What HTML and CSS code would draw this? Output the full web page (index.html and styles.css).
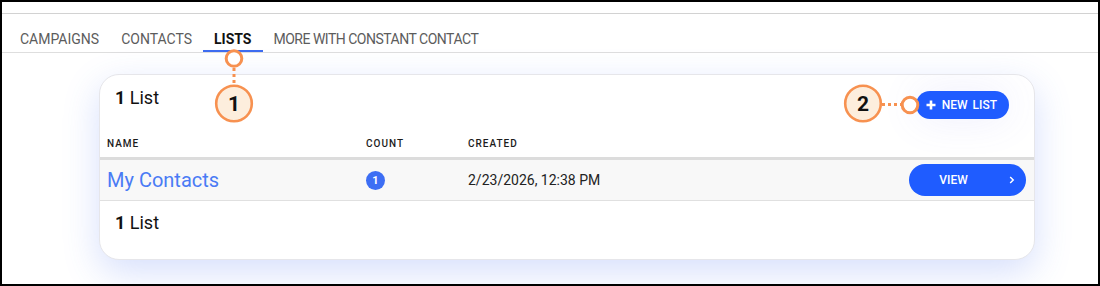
FILE: index.html
```html
<!DOCTYPE html>
<html>
<head>
<meta charset="utf-8">
<link rel="stylesheet" href="styles.css">
</head>
<body>
<div class="frame">
  <div class="topbar"></div>
  <nav class="tabs">
    <a class="tab">CAMPAIGNS</a>
    <a class="tab">CONTACTS</a>
    <a class="tab active">LISTS</a>
    <a class="tab tab-more">MORE WITH CONSTANT CONTACT</a>
  </nav>
  <section class="card">
    <div class="card-head">
      <div class="title"><b>1</b> List</div>
      <button class="btn new-btn">
        <svg class="plus" width="10" height="10" viewBox="0 0 10 10"><path d="M5 0.5v9M0.5 5h9" stroke="#fff" stroke-width="2.6"/></svg>
        <span class="new-label">NEW LIST</span>
      </button>
    </div>
    <table class="lists">
      <thead>
        <tr>
          <th class="c-name">NAME</th>
          <th class="c-count">COUNT</th>
          <th class="c-created">CREATED</th>
          <th class="c-act"></th>
        </tr>
      </thead>
      <tbody>
        <tr>
          <td class="c-name"><a class="list-link">My Contacts</a></td>
          <td class="c-count"><span class="badge">1</span></td>
          <td class="c-created">2/23/2026, 12:38 PM</td>
          <td class="c-act">
            <button class="btn view-btn"><span class="view-label">VIEW</span>
              <svg class="chev" width="6" height="8" viewBox="0 0 6 8"><path d="M1.2 1l3 3-3 3" fill="none" stroke="#fff" stroke-width="1.5"/></svg>
            </button>
          </td>
        </tr>
      </tbody>
    </table>
    <div class="card-foot"><b>1</b> List</div>
  </section>
  <svg class="annot" width="1100" height="286" viewBox="0 0 1100 286">
    <g fill="none" stroke="#f79150" stroke-width="3">
      <line x1="234" y1="68" x2="234" y2="84" stroke-dasharray="3 3"/>
      <line x1="882" y1="104.5" x2="902" y2="104.5" stroke-dasharray="3 3"/>
    </g>
    <circle cx="234" cy="58.5" r="7.8" fill="#fff" stroke="#f79150" stroke-width="3"/>
    <circle cx="234" cy="103.5" r="17.8" fill="#fdeedd" stroke="#f79150" stroke-width="2.6"/>
    <circle cx="910" cy="105" r="7.8" fill="#fff" stroke="#f79150" stroke-width="3"/>
    <circle cx="863" cy="103.5" r="17.8" fill="#fdeedd" stroke="#f79150" stroke-width="2.6"/>
    <text x="234" y="111" class="annot-num">1</text>
    <text x="863" y="111" class="annot-num">2</text>
  </svg>
</div>
</body>
</html>
```
FILE: styles.css
```css
* { box-sizing: border-box; }
html, body { margin: 0; padding: 0; background: #fff; }
body { font-family: Roboto, "Liberation Sans", Arial, sans-serif; color: #111; }

.frame {
  position: relative;
  width: 1100px;
  height: 286px;
  border: 2px solid #000;
  overflow: hidden;
  background: #fff;
}

.topbar {
  height: 12px;
  border-bottom: 1px solid #d2d2d2;
}

.tabs {
  display: flex;
  padding-left: 7px;
  border-bottom: 1px solid #dedede;
}
.tab {
  display: block;
  padding: 17px 11px 3px;
  line-height: 16px;
  font-size: 14px;
  color: #5c5c5c;
  border-bottom: 2px solid transparent;
  white-space: nowrap;
}
.tab-more { letter-spacing: -0.5px; }
.tab.active {
  color: #111;
  font-weight: 700;
  border-bottom-color: #3d6cf0;
}

.card {
  margin: 21px 0 0 97px;
  width: 936px;
  height: 186px;
  border: 1px solid #e6e6ea;
  border-radius: 20px;
  background: #fff;
  box-shadow: 0 12px 36px rgba(70, 110, 240, 0.22);
  overflow: hidden;
}

.card-head {
  height: 57px;
  display: flex;
  justify-content: space-between;
  align-items: flex-start;
  padding: 0 25px 0 15px;
}
.title {
  margin-top: 13px;
  font-size: 18px;
  line-height: 20px;
}
.title b, .card-foot b { font-weight: 700; }

.btn {
  border: none;
  background: #1f5cff;
  color: #fff;
  font-family: Roboto, "Liberation Sans", Arial, sans-serif;
  font-weight: 500;
  font-size: 12px;
  line-height: 14px;
  cursor: pointer;
}
.new-btn {
  margin-top: 16px;
  height: 28px;
  border-radius: 14px;
  padding: 0 12px 0 10px;
  display: flex;
  align-items: center;
  gap: 6px;
  box-shadow: 0 0 40px rgba(110, 110, 240, 0.12);
}
.new-label { word-spacing: 2px; }
.plus { display: block; }

.lists {
  width: 100%;
  border-collapse: collapse;
}
.lists th {
  text-align: left;
  font-size: 10px;
  line-height: 12px;
  font-weight: 500;
  letter-spacing: 1px;
  color: #1c1c1c;
  padding: 6px 7px 7px;
  border-bottom: 3px solid #dcdcdc;
}
.lists td {
  background: #f8f8f8;
  padding: 4px 7px;
  height: 41px;
  border-bottom: 1px solid #e0e0e0;
  vertical-align: middle;
  font-size: 14px;
  color: #222;
}
.lists .c-name { width: 259px; }
.lists .c-count { width: 102px; }
.lists .c-created { width: auto; }
.lists td.c-act { text-align: right; padding-right: 8px; width: 140px; }

.list-link {
  font-size: 20px;
  line-height: 24px;
  color: #4a7bf5;
}

.badge {
  display: inline-flex;
  align-items: center;
  justify-content: center;
  width: 19px;
  height: 19px;
  border-radius: 50%;
  background: #3d6ef4;
  color: #fff;
  font-size: 11px;
  font-weight: 700;
  vertical-align: middle;
}

.view-btn {
  width: 117px;
  height: 32px;
  border-radius: 16px;
  display: inline-flex;
  align-items: center;
  padding: 0 11px 0 0;
  vertical-align: middle;
}
.view-label {
  flex: 1;
  text-align: center;
}
.chev { display: block; margin-left: 11px; }

.card-foot {
  padding: 12px 15px 0;
  font-size: 18px;
  line-height: 20px;
}

.annot {
  position: absolute;
  left: -2px;
  top: -2px;
  pointer-events: none;
}
.annot-num {
  font-family: Roboto, "Liberation Sans", Arial, sans-serif;
  font-size: 21px;
  font-weight: 700;
  fill: #111;
  text-anchor: middle;
}
```
